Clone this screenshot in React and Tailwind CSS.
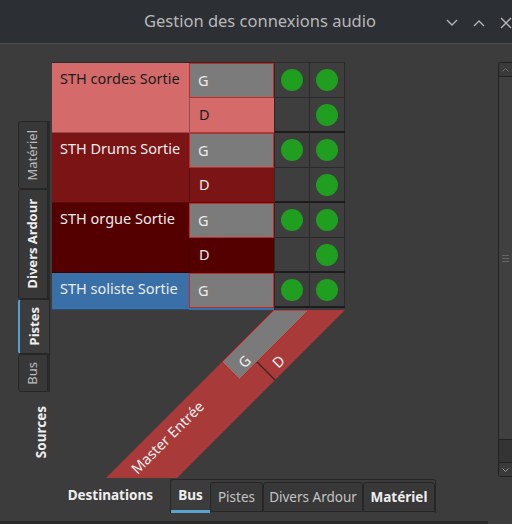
import React from 'react';

const groups = [
  { name: 'STH cordes Sortie', bg: 'bg-[#d46a6a]', text: 'text-[#1c1c1c]', rows: [['G', [1, 1]], ['D', [0, 1]]] },
  { name: 'STH Drums Sortie', bg: 'bg-[#7b1414]', text: 'text-[#ececec]', rows: [['G', [1, 1]], ['D', [0, 1]]] },
  { name: 'STH orgue Sortie', bg: 'bg-[#540000]', text: 'text-[#ececec]', rows: [['G', [1, 1]], ['D', [0, 1]]] },
  { name: 'STH soliste Sortie', bg: 'bg-[#3a70a8]', text: 'text-[#ececec]', rows: [['G', [1, 1]]], tail: true },
];

function Dot() {
  return <span className="block w-[22px] h-[22px] rounded-full bg-[#1f9e1f]" />;
}

function Group({ g }) {
  return (
    <div className="flex">
      <div className={`w-[137px] ${g.bg} ${g.text} px-[8px] pt-[5px] text-[14.5px] leading-[20px] border-b border-black/30`}>
        {g.name}
      </div>
      <div className={`w-[85px] flex flex-col ${g.bg}`}>
        {g.rows.map(([p], i) =>
          p === 'G' ? (
            <div key={i} className="h-[35px] bg-[#7b7b7b] border border-[#c62828] text-[#ececec] text-[14.5px] pl-[8px] flex items-center">
              G
            </div>
          ) : (
            <div key={i} className={`h-[35px] border-l border-b border-black/30 ${g.text} text-[14.5px] pl-[9px] flex items-center`}>
              D
            </div>
          )
        )}
        {g.tail && <div className="h-[2px]" />}
      </div>
      <div className="w-[71px] flex flex-col border-l border-[#2a2a2a]">
        {g.rows.map(([p, cells], i) => (
          <div
            key={i}
            className={`flex h-[35px] ${i === g.rows.length - 1 ? 'border-b-2 border-[#1c1c1c]' : 'border-b border-[#2a2a2a]'}`}
          >
            {cells.map((c, j) => (
              <div key={j} className="w-[35px] border-r border-[#2a2a2a] bg-[#3e3e3e] flex items-center justify-center">
                {c ? <Dot /> : null}
              </div>
            ))}
          </div>
        ))}
      </div>
    </div>
  );
}

function VTab({ label, h, bold, active }) {
  return (
    <div
      className={`flex items-center justify-center rounded-l-[3px] border border-[#262626] ${
        active ? 'bg-[#3c3c3c] border-l-2 border-l-[#4fa3d1] -mr-[2px]' : 'bg-[#383838]'
      } ${bold ? 'font-bold text-[#eeeeee]' : 'text-[#bdbdbd]'}`}
      style={{ height: h }}
    >
      <span className="[writing-mode:vertical-rl] rotate-180 text-[13px]">{label}</span>
    </div>
  );
}

function HTab({ label, w, bold, active }) {
  return (
    <div
      className={`flex items-center justify-center text-[13.5px] ${
        active
          ? 'h-[33px] border-b-[3px] border-[#58a4cc] font-bold text-[#eeeeee]'
          : 'h-[30px] mt-[2px] border border-[#262626] rounded-t-[3px] bg-[#383838] ' + (bold ? 'font-bold text-[#eeeeee]' : 'text-[#c4c4c4]')
      }`}
      style={{ width: w }}
    >
      {label}
    </div>
  );
}

function Band() {
  return (
    <svg width="293" height="168" viewBox="0 0 293 168" className="block">
      <polygon points="222,0 293,0 125,168 54,168" fill="#a83a3a" />
      <polygon points="222,0 257,0 187.5,69.5 170,52" fill="#7a7a7a" stroke="#e01414" strokeWidth="1" />
      <line x1="205" y1="52" x2="223" y2="70" stroke="#3a2222" strokeWidth="1.2" />
      <g fill="#eeeeee" fontSize="14.5" fontFamily="'Noto Sans', sans-serif">
        <text x="192" y="51" transform="rotate(-45 192 51)" textAnchor="middle" dominantBaseline="central">G</text>
        <text x="226" y="51" transform="rotate(-45 226 51)" textAnchor="middle" dominantBaseline="central">D</text>
        <text x="115" y="127" transform="rotate(-45 115 127)" textAnchor="middle" dominantBaseline="central">Master Entrée</text>
      </g>
    </svg>
  );
}

function Chevron({ up }) {
  return (
    <svg width="12" height="8" viewBox="0 0 12 8" fill="none" stroke="#b4b4b4" strokeWidth="1.4">
      <polyline points={up ? '1,7 6,2 11,7' : '1,1 6,6 11,1'} />
    </svg>
  );
}

export default function App() {
  return (
    <div className="w-[512px] h-[524px] overflow-hidden bg-[#3c3c3c] flex flex-col font-['Noto_Sans',sans-serif]">
      <div className="h-[44px] bg-[#2c2f33] border-b border-[#4c4c4c] flex items-center relative shrink-0">
        <div className="flex-1 text-center pl-[8px] text-[16.5px] text-[#b8b8b8]">Gestion des connexions audio</div>
        <div className="absolute left-[446px] top-[17px] flex items-center gap-[15px]">
          <Chevron />
          <Chevron up />
          <svg width="12" height="12" viewBox="0 0 12 12" stroke="#b4b4b4" strokeWidth="1.4">
            <line x1="1" y1="1" x2="11" y2="11" />
            <line x1="11" y1="1" x2="1" y2="11" />
          </svg>
        </div>
      </div>

      <div className="h-[434px] flex shrink-0">
        <div className="w-[52px] flex flex-col">
          <div className="ml-[18px] mt-[77px] w-[32px] flex flex-col border-r-2 border-[#2a2a2a]">
            <VTab label="Matériel" h={68} />
            <VTab label="Divers Ardour" h={110} bold />
            <VTab label="Pistes" h={55} bold active />
            <VTab label="Bus" h={38} />
          </div>
          <div className="mt-[10px] ml-[31px] h-[60px] flex items-center">
            <span className="[writing-mode:vertical-rl] rotate-180 text-[13.5px] font-bold text-[#eeeeee]">Sources</span>
          </div>
        </div>

        <div className="w-[293px] pt-[18px] flex flex-col">
          <div className="border-t border-[#2a2a2a]">
            {groups.map((g, i) => (
              <Group key={i} g={g} />
            ))}
          </div>
          <Band />
        </div>

        <div className="flex-1" />

        <div className="w-[14px] mt-[18px] h-[415px] flex flex-col border-l border-t border-b border-[#222222] rounded-tl-[3px] rounded-bl-[3px]">
          <div className="h-[14px] bg-[#3a3a3a] border-b border-[#222222] flex items-center justify-center">
            <svg width="7" height="4" viewBox="0 0 7 4" fill="none" stroke="#6a6a6a"><polyline points="0.5,3.5 3.5,0.5 6.5,3.5" /></svg>
          </div>
          <div className="h-[363px] bg-[#404040] border-b border-[#222222] flex items-center justify-center">
            <div className="flex flex-col gap-[2px]">
              <span className="block w-[7px] h-px bg-[#666666]" />
              <span className="block w-[7px] h-px bg-[#666666]" />
              <span className="block w-[7px] h-px bg-[#666666]" />
            </div>
          </div>
          <div className="flex-1 bg-[#343434] border-b border-[#222222]" />
          <div className="h-[13px] bg-[#3a3a3a] flex items-center justify-center">
            <svg width="7" height="4" viewBox="0 0 7 4" fill="none" stroke="#9a9a9a"><polyline points="0.5,0.5 3.5,3.5 6.5,0.5" /></svg>
          </div>
        </div>
      </div>

      <div className="h-[43px] flex items-start shrink-0">
        <div className="w-[170px] h-[34px] flex items-center justify-end pr-[17px] text-[13.5px] font-bold text-[#eeeeee]">
          Destinations
        </div>
        <div className="mt-[1px] flex border-t border-x border-[#262626] rounded-t-[3px]">
          <HTab label="Bus" w={39} active />
          <HTab label="Pistes" w={53} />
          <HTab label="Divers Ardour" w={100} />
          <HTab label="Matériel" w={72} bold />
        </div>
      </div>
      <div className="h-[3px] w-[488px] bg-[#2a2a2a]" />
    </div>
  );
}
